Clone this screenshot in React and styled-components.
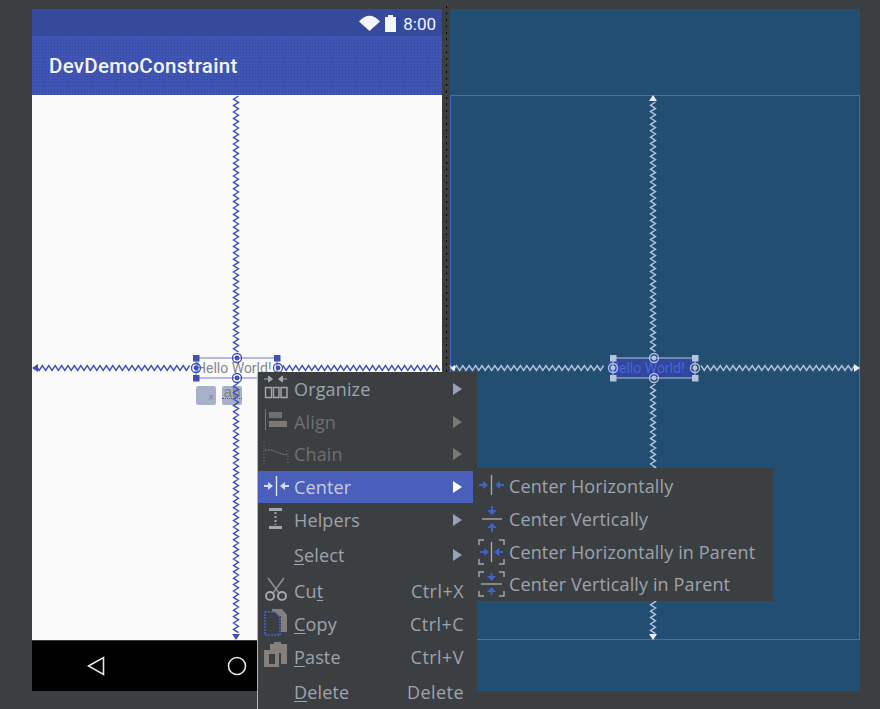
import React from 'react';
import styled, {createGlobalStyle} from 'styled-components';

const GlobalStyle = createGlobalStyle`
    html, body {
        margin: 0;
        background: #3c3f41;
    }
`;

const Stage = styled.div`
    position: relative;
    width: 880px;
    height: 709px;
    overflow: hidden;
    background: #3c3f41;
    font-family: "Open Sans", "Liberation Sans", sans-serif;
`;

const Panels = styled.div`
    display: flex;
    padding: 9px 20px 0 32px;
`;

const Phone = styled.div`
    display: flex;
    flex-direction: column;
    width: 410px;
    height: 682px;
`;

const StatusBar = styled.div`
    display: flex;
    align-items: center;
    justify-content: flex-end;
    gap: 6px;
    height: 27px;
    padding-right: 6px;
    padding-top: 2px;
    box-sizing: border-box;
    background: #364a9c;
    color: #f2f4fa;
    font: 17px Roboto, sans-serif;
`;

const AppBar = styled.div`
    display: flex;
    align-items: center;
    height: 59px;
    padding-left: 17px;
    background-color: #4055b3;
    background-image: radial-gradient(#34479c 0.7px, transparent 0.8px);
    background-size: 3px 3px;
    color: #f2f4fb;
    font: 500 20.5px Roboto, sans-serif;
    letter-spacing: 0.3px;
`;

const Canvas = styled.div`
    flex: 1;
    background: #fafafa;
`;

const NavBar = styled.div`
    display: flex;
    align-items: center;
    height: 51px;
    padding-left: 55px;
    gap: 122px;
    background: #000;
    border-top: 1px solid #3c3f41;
    box-sizing: border-box;
`;

const Divider = styled.div`
    width: 8px;
    margin-top: -3px;
    height: 690px;
    display: flex;
    justify-content: center;
    &::before {
        content: "";
        width: 1px;
        height: 100%;
        background: linear-gradient(#000 2px, transparent 2px) 0 0 / 1px 6.500px;
    }
`;

const Blueprint = styled.div`
    width: 410px;
    height: 682px;
    padding-top: 86px;
    box-sizing: border-box;
    background: #224e72;
`;

const Sheet = styled.div`
    height: 545px;
    border: 1px solid #4d67c9;
    box-sizing: border-box;
`;

const Baseline = styled.div`
    height: 1px;
    margin: 15px 20px 0 30px;
    background: linear-gradient(90deg, #000 2px, transparent 2px) 0 0 / 4px 1px;
`;

const Blueprints = styled.svg`
    position: absolute;
    left: 0;
    top: 0;
    pointer-events: none;
`;

const PhoneWidget = styled.div`
    position: absolute;
    left: 196px;
    top: 358px;
    color: #85888c;
    font: 14px Roboto, sans-serif;
    line-height: 20px;
    white-space: nowrap;
`;

const BlueprintWidget = styled.div`
    position: absolute;
    left: 613px;
    top: 358px;
    width: 82px;
    height: 20px;
    text-indent: -4px;
    background: #30489c;
    color: #4a62d6;
    font: 14px Roboto, sans-serif;
    line-height: 20px;
    white-space: nowrap;
`;

const Badge = styled.div`
    position: absolute;
    left: ${p => p.$x}px;
    top: 386px;
    width: 20px;
    height: 19px;
    border-radius: 2px;
    background: #a7b1cc;
    color: #86807c;
    font: 15px "Liberation Sans", sans-serif;
    line-height: 11px;
    text-align: center;
`;

const BadgeMark = styled.span`
    position: absolute;
    right: 2px;
    bottom: 3px;
    font-size: 10px;
    line-height: 8px;
`;

const BadgeRule = styled.span`
    position: absolute;
    left: 0;
    right: 0;
    top: 12px;
    border-top: 1px dotted #3f51b5;
`;

const Menu = styled.div`
    position: absolute;
    left: 257px;
    top: 372px;
    width: 220px;
    height: 337px;
    padding-top: 0.5px;
    box-sizing: border-box;
    background: #3c3f41;
    border-left: 1px solid #a9b3cd;
`;

const Row = styled.div`
    display: flex;
    align-items: center;
    height: ${p => p.$h || 32.7}px;
    padding: 0 13px 0 5px;
    gap: 5px;
    background: ${p => p.$active ? '#4a5fbb' : 'transparent'};
    color: ${p => p.$active ? '#c8cee0' : p.$off ? '#6d7072' : '#9ea3ad'};
    font-size: 18px;
    letter-spacing: 0.15px;
`;

const IconBox = styled.span`
    display: flex;
    width: 26px;
    height: 26px;
    flex: none;
    svg {
        overflow: visible;
    }
`;

const Label = styled.span`
    flex: 1;
    white-space: nowrap;
    u {
        text-underline-offset: 2px;
        text-decoration-thickness: 1px;
    }
`;

const Shortcut = styled.span`
    white-space: nowrap;
    letter-spacing: 0.45px;
`;

const Arrow = styled.span`
    margin-right: 2px;
    border-left: 9px solid ${p => p.$color || '#97a2bf'};
    border-top: 6.5px solid transparent;
    border-bottom: 6.5px solid transparent;
`;

const SubMenu = styled.div`
    position: absolute;
    left: 473px;
    top: 468px;
    width: 300px;
    height: 133px;
    padding-top: 2px;
    box-sizing: border-box;
    background: #3c3f41;
`;

const SubRow = styled.div`
    display: flex;
    align-items: center;
    gap: 5px;
    height: 32.7px;
    padding-left: 5px;
    color: #9ea3ad;
    font-size: 18px;
    letter-spacing: 0.13px;
    white-space: nowrap;
`;

function zigzag(x1, y1, x2, y2, amp = 2.5, step = 3.2) {
    const len = Math.hypot(x2 - x1, y2 - y1);
    const n = Math.floor(len / step);
    const ux = (x2 - x1) / len;
    const uy = (y2 - y1) / len;
    const pts = [];
    for (let i = 0; i <= n; i++) {
        const off = i % 2 ? amp : -amp;
        pts.push(`${x1 + ux * i * step - uy * off},${y1 + uy * i * step + ux * off}`);
    }
    return pts.join(' ');
}

function Spring({from, to, color}) {
    return <polyline points={zigzag(from[0], from[1], to[0], to[1])} fill="none" stroke={color} strokeWidth="1.4"/>;
}

function Anchor({x, y, stroke, fill}) {
    return (
        <g>
            <circle cx={x} cy={y} r="4.5" fill="none" stroke={stroke} strokeWidth="1.3"/>
            <circle cx={x} cy={y} r="2.4" fill={fill}/>
        </g>
    );
}

function Handle({x, y, color}) {
    return <rect x={x - 3} y={y - 3} width="6.5" height="6.5" fill={color}/>;
}

const BLUE = '#3f51b5';
const PALE = '#b7c2dc';
const GRID = '#a4a8ae';
const ARROW = '#3f63c8';

function OrganizeIcon() {
    return (
        <svg width="26" height="26" viewBox="0 0 26 26">
            <path d="M1 3h5M5.500 0l4 3-4 3zM24 3h-5M19.500 0l-4 3 4 3z" fill={GRID} stroke={GRID} strokeWidth="1"/>
            <path d="M2.500 11.500h6v10h-6zM10.500 11.500h5.500v10h-5.500zM18 11.500h6v10h-6z" fill="none" stroke={GRID} strokeWidth="1.4"/>
        </svg>
    );
}

function AlignIcon() {
    return (
        <svg width="26" height="26" viewBox="0 0 26 26">
            <path d="M2.500 0v21" stroke="#74787a" strokeWidth="1"/>
            <rect x="6" y="3" width="13" height="6" fill="#716e6b"/>
            <rect x="6" y="12" width="18" height="6" fill="#7d7a76"/>
        </svg>
    );
}

function ChainIcon() {
    return (
        <svg width="26" height="26" viewBox="0 0 26 26">
            <path d="M1 1v22M25 9v14" stroke="#6a6d6f" strokeWidth="1" strokeDasharray="1 2"/>
            <path d="M2 9h6l6 2 5 2 6 1" fill="none" stroke="#807c78" strokeWidth="1" strokeDasharray="2 1"/>
        </svg>
    );
}

function CenterIcon({color = ARROW, line = GRID}) {
    return (
        <svg width="26" height="26" viewBox="0 0 26 26">
            <path d="M13.500 2v20" stroke={line} strokeWidth="1.4"/>
            <path d="M1 12h5" stroke={color} strokeWidth="2"/>
            <path d="M5 8l5 4-5 4z" fill={color}/>
            <path d="M26 12h-5" stroke={color} strokeWidth="2"/>
            <path d="M22 8l-5 4 5 4z" fill={color}/>
        </svg>
    );
}

function CenterVIcon() {
    return (
        <svg width="26" height="26" viewBox="0 0 26 26">
            <path d="M4 13h20" stroke={GRID} strokeWidth="1.4"/>
            <path d="M14 0v5M14 26v-5" stroke={ARROW} strokeWidth="2"/>
            <path d="M9 4h10l-5 5zM9 22h10l-5-5z" fill={ARROW}/>
        </svg>
    );
}

function Brackets() {
    return <path d="M1 6V1h5M21 1h5v5M1 20v5h5M21 25h5v-5" fill="none" stroke={GRID} strokeWidth="1.4"/>;
}

function CenterParentIcon() {
    return (
        <svg width="26" height="26" viewBox="0 0 26 26">
            <Brackets/>
            <path d="M13.500 3v20" stroke={GRID} strokeWidth="1.4"/>
            <path d="M2 13h5M25 13h-5" stroke={ARROW} strokeWidth="2"/>
            <path d="M6 9l5 4-5 4zM21 9l-5 4 5 4z" fill={ARROW}/>
        </svg>
    );
}

function CenterVParentIcon() {
    return (
        <svg width="26" height="26" viewBox="0 0 26 26">
            <Brackets/>
            <path d="M3 13h21" stroke={GRID} strokeWidth="1.4"/>
            <path d="M13.500 2v4M13.500 24v-4" stroke={ARROW} strokeWidth="2"/>
            <path d="M9 5h9l-4.500 5zM9 21h9l-4.500-5z" fill={ARROW}/>
        </svg>
    );
}

function HelpersIcon() {
    return (
        <svg width="26" height="26" viewBox="0 0 26 26">
            <path d="M6 1h13v3H6zM6 19h13v3H6z" fill={GRID}/>
            <path d="M12.500 5v13" stroke={GRID} strokeWidth="2" strokeDasharray="2 2"/>
        </svg>
    );
}

function CutIcon() {
    return (
        <svg width="26" height="26" viewBox="0 0 26 26">
            <path d="M5 0l11 15M21 0L10 15" stroke="#8f8d8a" strokeWidth="1.6" fill="none"/>
            <circle cx="7" cy="18" r="4" fill="none" stroke={GRID} strokeWidth="2"/>
            <circle cx="19" cy="18" r="4" fill="none" stroke={GRID} strokeWidth="2"/>
        </svg>
    );
}

function CopyIcon() {
    return (
        <svg width="26" height="26" viewBox="0 0 26 26">
            <path d="M9 -2h10l5 6v17h-6V5H9z" fill="#86807c"/>
            <path d="M2 1h10l5 5v18H2z" fill="#3c3f41" stroke="#4a62c8" strokeWidth="1.6" strokeDasharray="2 1"/>
        </svg>
    );
}

function PasteIcon() {
    return (
        <svg width="26" height="26" viewBox="0 0 26 26">
            <path d="M7 0h4v-2h7v2h6v20h-6V9H7z" fill="#86807c"/>
            <path d="M1 6h15v17H1z" fill="#86807c"/>
            <path d="M6 10h6v10H6z" fill="#3c3f41"/>
        </svg>
    );
}

const wifi = 'M360 20.500 Q370.500 9 381 20.500 L370.500 30 Z';
const battery = 'M386 16h3v-2h5v2h3v15h-11z';

function App() {
    return (
        <Stage>
            <GlobalStyle/>
            <Panels>
                <Phone>
                    <StatusBar>
                        <svg width="38" height="18" viewBox="360 14 38 18">
                            <path d={wifi} fill="#f5f6fb"/>
                            <path d={battery} fill="#f5f6fb"/>
                        </svg>
                        8:00
                    </StatusBar>
                    <AppBar>DevDemoConstraint</AppBar>
                    <Canvas/>
                    <NavBar>
                        <svg width="18" height="20" viewBox="0 0 18 20">
                            <path d="M1.500 10L16.500 1.500v17z" fill="none" stroke="#e4e6ee" strokeWidth="1.6"/>
                        </svg>
                        <svg width="20" height="20" viewBox="0 0 20 20">
                            <circle cx="10" cy="10" r="8.500" fill="none" stroke="#e4e6ee" strokeWidth="1.6"/>
                        </svg>
                    </NavBar>
                </Phone>
                <Divider/>
                <Blueprint>
                    <Sheet/>
                </Blueprint>
            </Panels>
            <Baseline/>

            <PhoneWidget>Hello World!</PhoneWidget>
            <BlueprintWidget>Hello World!</BlueprintWidget>
            <Badge $x={196}><BadgeMark>×</BadgeMark></Badge>
            <Badge $x={222}>ab<BadgeRule/></Badge>

            <Blueprints width="880" height="709" viewBox="0 0 880 709">
                <Spring from={[236, 96]} to={[236, 353]} color={BLUE}/>
                <Spring from={[236, 383]} to={[236, 634]} color={BLUE}/>
                <Spring from={[36, 368]} to={[191, 368]} color={BLUE}/>
                <Spring from={[283, 368]} to={[442, 368]} color={BLUE}/>
                <path d="M236 640l-4-6h8zM32 368l6-4v8z" fill={BLUE}/>

                <rect x="196" y="358" width="81" height="20" fill="none" stroke="#6f7dc4" strokeWidth="1"/>
                <Handle x={196} y={358} color={BLUE}/>
                <Handle x={277} y={358} color={BLUE}/>
                <Handle x={196} y={378} color={BLUE}/>
                <Anchor x={237} y={358} stroke={BLUE} fill={BLUE}/>
                <Anchor x={196} y={368} stroke={BLUE} fill={BLUE}/>
                <Anchor x={278} y={368} stroke={BLUE} fill={BLUE}/>
                <Anchor x={237} y={378} stroke={BLUE} fill={BLUE}/>

                <Spring from={[653, 102]} to={[653, 353]} color={PALE}/>
                <Spring from={[653, 384]} to={[653, 634]} color={PALE}/>
                <Spring from={[450, 368]} to={[606, 368]} color={PALE}/>
                <Spring from={[701, 368]} to={[855, 368]} color={PALE}/>
                <path d="M653 95l-4 6h8zM653 640l-4-6h8zM860 368l-6-4v8zM450 368l5-3v6z" fill="#e8ecf5"/>

                <rect x="613" y="358" width="82" height="20" fill="none" stroke={PALE} strokeWidth="1"/>
                <Handle x={613} y={358} color={PALE}/>
                <Handle x={695} y={358} color={PALE}/>
                <Handle x={613} y={378} color={PALE}/>
                <Handle x={695} y={378} color={PALE}/>
                <Anchor x={654} y={358} stroke={PALE} fill={PALE}/>
                <Anchor x={613} y={368} stroke={PALE} fill={PALE}/>
                <Anchor x={695} y={368} stroke={PALE} fill={PALE}/>
                <Anchor x={654} y={378} stroke={PALE} fill={PALE}/>
            </Blueprints>

            <Menu>
                <Row><IconBox><OrganizeIcon/></IconBox><Label>Organize</Label><Arrow/></Row>
                <Row $off><IconBox><AlignIcon/></IconBox><Label>Align</Label><Arrow $color="#7d7872"/></Row>
                <Row $off><IconBox><ChainIcon/></IconBox><Label>Chain</Label><Arrow $color="#7d7872"/></Row>
                <Row $active><IconBox><CenterIcon color="#d7dbea" line="#e4e6ee"/></IconBox><Label>Center</Label><Arrow $color="#fff"/></Row>
                <Row><IconBox><HelpersIcon/></IconBox><Label>Helpers</Label><Arrow/></Row>
                <Row $h={39}><IconBox/><Label><u>S</u>elect</Label><Arrow/></Row>
                <Row $h={33}><IconBox><CutIcon/></IconBox><Label>Cu<u>t</u></Label><Shortcut>Ctrl+X</Shortcut></Row>
                <Row $h={33}><IconBox><CopyIcon/></IconBox><Label><u>C</u>opy</Label><Shortcut>Ctrl+C</Shortcut></Row>
                <Row $h={33}><IconBox><PasteIcon/></IconBox><Label><u>P</u>aste</Label><Shortcut>Ctrl+V</Shortcut></Row>
                <Row $h={37}><IconBox/><Label><u>D</u>elete</Label><Shortcut>Delete</Shortcut></Row>
            </Menu>

            <SubMenu>
                <SubRow><IconBox><CenterIcon/></IconBox>Center Horizontally</SubRow>
                <SubRow><IconBox><CenterVIcon/></IconBox>Center Vertically</SubRow>
                <SubRow><IconBox><CenterParentIcon/></IconBox>Center Horizontally in Parent</SubRow>
                <SubRow><IconBox><CenterVParentIcon/></IconBox>Center Vertically in Parent</SubRow>
            </SubMenu>
        </Stage>
    );
}

export default App;
